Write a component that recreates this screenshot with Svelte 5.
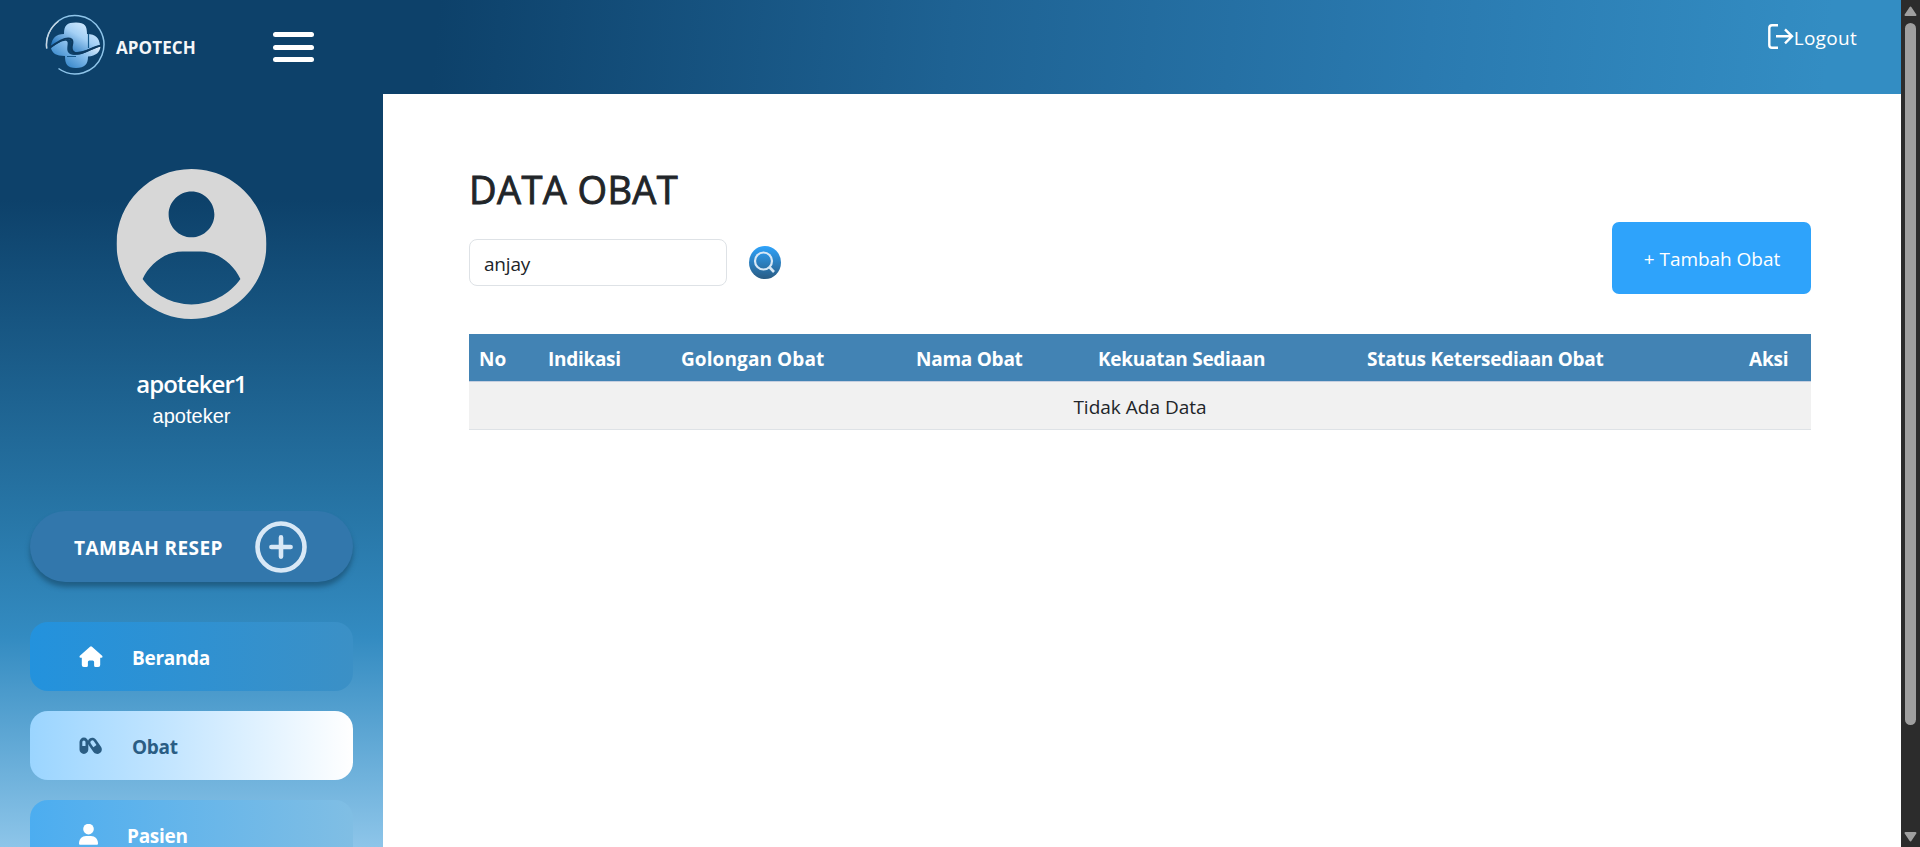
<script>
  const columns = [
    { label: 'No', width: 69, tracking: 0 },
    { label: 'Indikasi', width: 133, tracking: -0.3 },
    { label: 'Golongan Obat', width: 235, tracking: 0.1 },
    { label: 'Nama Obat', width: 182, tracking: -0.25 },
    { label: 'Kekuatan Sediaan', width: 269, tracking: -0.28 },
    { label: 'Status Ketersediaan Obat', width: 382, tracking: -0.27 },
    { label: 'Aksi', width: 72, tracking: -0.2 }
  ];
  let query = $state('anjay');
</script>

<div class="page">
  <div class="app">
    <header>
      <div class="brand">
        <svg class="logo" width="62" height="64" viewBox="0 0 62 64">
          <defs>
            <linearGradient id="cross" x1="0.9" y1="0.1" x2="0.15" y2="0.85">
              <stop offset="0" stop-color="#d9edff" />
              <stop offset="0.45" stop-color="#a4d0f5" />
              <stop offset="1" stop-color="#2375bd" />
            </linearGradient>
            <linearGradient id="lower" x1="1" y1="0.1" x2="0.1" y2="0.8">
              <stop offset="0" stop-color="#f1f8ff" />
              <stop offset="0.5" stop-color="#83bbea" />
              <stop offset="1" stop-color="#2c80c6" />
            </linearGradient>
          </defs>
          <path d="M1.700 34.500A28.700 29.200 0 1 1 13.500 54.500" fill="none" stroke="#8fc5ea" stroke-width="1.500" />
          <path d="M1.700 34.500A28.700 29.200 0 0 1 13.500 7.300" fill="none" stroke="#c9d5df" stroke-width="1.300" />
          <path d="M19 20C19 11 22 8.500 31 8.500S42 12 42 20C51 20 54 24 55 31C46 34 40 37 32 38C23 38 29 29 26 26C22 23 12 28 6 32C7 24 11 20 19 20Z" fill="url(#cross)" />
          <path d="M6 34C14 28 21 25 22.500 28C23.500 32 19 40 29 41C39 41 46 35 55.500 32.500C55 38 51 42 43 42.500C43 50 40 54 31 54S20 50 20 42C11 42 7 39 6 34Z" fill="url(#lower)" />
          <path d="M5 33.500C15 26 23 22.500 26.500 25.500S23 34.500 29 38.500S45 34 56 31.500" fill="none" stroke="#0d3a60" stroke-width="2" />
          <path d="M43.500 20V34M22 42.500H31" fill="none" stroke="#175a8c" stroke-width="1.200" />
        </svg>
        <span class="brand-name">APOTECH</span>
      </div>
      <button class="burger" aria-label="Menu"><i></i><i></i><i></i></button>
      <a class="logout" href="#logout">
        <svg width="27" height="27" viewBox="0 0 27 27" fill="none" stroke="#fff" stroke-width="2.400">
          <path d="M11 2.200H5Q2.300 2.200 2.300 5V22Q2.300 24.800 5 24.800H11" />
          <path d="M9 13.300H25M18 6.300L25 13.300L18 20.300" />
        </svg><span>Logout</span>
      </a>
    </header>

    <div class="body">
      <aside>
        <svg class="avatar" width="150" height="150" viewBox="2 2 20 20">
          <path fill="#d7d7d7" d="M12 2C6.480 2 2 6.480 2 12s4.480 10 10 10 10-4.480 10-10S17.520 2 12 2zm0 3c1.660 0 3.050 1.390 3.050 3.050S13.660 11.100 12 11.100 8.950 9.710 8.950 8.050 10.340 5 12 5zm0 15.060c-2.600 0-4.980-1.270-6.520-3.380C6.400 14.650 8.500 13 10.800 13H13.200c2.300 0 4.400 1.650 5.320 3.680C16.980 18.790 14.600 20.060 12 20.060z" />
        </svg>
        <div class="user">apoteker1</div>
        <div class="role">apoteker</div>

        <button class="recipe">
          <span>TAMBAH RESEP</span>
          <svg width="52" height="52" viewBox="0 0 52 52" fill="none" stroke="#d8e8f6">
            <circle cx="26" cy="26" r="23.500" stroke-width="4.600" />
            <path d="M26 16.400V35.600M16.400 26H35.600" stroke-width="4.600" stroke-linecap="round" />
          </svg>
        </button>

        <nav>
          <a class="item home" href="#beranda">
            <svg width="24" height="24" viewBox="0 0 24 24"><path fill="#fff" d="M11 1.700Q12 .8 13 1.700L23.400 11.100Q24 12.600 22.500 12.800H21.200V20Q21.200 22 19.200 22H16.500Q15.100 22 15.100 20.500V17Q15.100 15.500 13.600 15.500H10.400Q8.900 15.500 8.900 17V20.500Q8.900 22 7.500 22H4.800Q2.800 22 2.800 20V12.800H1.500Q0 12.600.6 11.100Z" /></svg>
            <span>Beranda</span>
          </a>
          <a class="item drug" href="#obat">
            <svg width="24" height="24" viewBox="0 0 24 24">
              <path fill="#2a5d84" fill-rule="evenodd" d="M.5 8A4.400 4.400 0 0 1 9.300 8V15.500A4.400 4.400 0 0 1 .5 15.500ZM3.300 8V12H6.500V8A1.600 1.600 0 0 0 3.300 8Z" />
              <g transform="rotate(-35 16 12)">
                <path fill="#2a5d84" fill-rule="evenodd" d="M11.300 7.500A4.600 4.600 0 0 1 20.500 7.500V16A4.600 4.600 0 0 1 11.300 16ZM14 7.500V12H17.800V7.500A1.900 1.900 0 0 0 14 7.500Z" />
              </g>
            </svg>
            <span>Obat</span>
          </a>
          <a class="item patient" href="#pasien">
            <svg width="19" height="22" viewBox="0 0 19 22"><circle cx="9.500" cy="5.100" r="5.300" fill="#fff" /><path fill="#fff" d="M0 19.700C0 15.200 3 12.100 7 12.100H12C16 12.100 19 15.200 19 19.700Q19 20.800 17.900 20.800H1.100Q0 20.800 0 19.700Z" /></svg>
            <span>Pasien</span>
          </a>
        </nav>
      </aside>

      <main>
        <h1>DATA OBAT</h1>
        <div class="tools">
          <input bind:value={query} aria-label="Cari obat" />
          <button class="search" aria-label="Cari">
            <svg width="32" height="33" viewBox="0 0 32 33">
              <defs><linearGradient id="lens" x2="0" y2="1"><stop stop-color="#2ea3fb" /><stop offset="1" stop-color="#2a5c84" /></linearGradient></defs>
              <ellipse cx="16" cy="16.500" rx="16" ry="16.500" fill="url(#lens)" />
              <g fill="none" stroke="#d8e8f6" stroke-width="2.200"><circle cx="14.500" cy="15" r="8.500" /><path d="M20.300 21L25 26" stroke-width="2.600" /></g>
            </svg>
          </button>
          <button class="add">+ Tambah Obat</button>
        </div>
        <table>
          <colgroup>{#each columns as c}<col style:width="{c.width}px" />{/each}</colgroup>
          <thead><tr>{#each columns as c}<th style:letter-spacing="{c.tracking}px">{c.label}</th>{/each}</tr></thead>
          <tbody><tr><td colspan="7">Tidak Ada Data</td></tr></tbody>
        </table>
      </main>
    </div>
  </div>

  <div class="scrollbar">
    <svg width="13" height="11" viewBox="0 0 13 11"><path d="M6.500 1.500L11.500 9H1.500Z" fill="#9f9f9f" stroke="#9f9f9f" stroke-width="2" stroke-linejoin="round" /></svg>
    <div class="thumb"></div>
    <svg class="down" width="13" height="11" viewBox="0 0 13 11"><path d="M6.500 9.500L11.500 2H1.500Z" fill="#9f9f9f" stroke="#9f9f9f" stroke-width="2" stroke-linejoin="round" /></svg>
  </div>
</div>

<style>
  :global(body) { margin: 0; overflow: hidden; }
  * { box-sizing: border-box; }
  button { font: inherit; border: 0; padding: 0; background: none; color: inherit; }
  a { color: inherit; text-decoration: none; }
  svg { display: block; flex: none; }
  .page { display: flex; width: 1920px; height: 847px; overflow: hidden; background: #fff; font-family: 'Open Sans', 'Noto Sans', sans-serif; font-size: 19px; color: #212529; }
  .app { width: 1901px; display: flex; flex-direction: column; }
  header { height: 94px; flex: none; display: flex; padding-left: 45px; padding-right: 44px; color: #fff; background: linear-gradient(95deg, #0d416a 23%, #1e6293 50%, #2a7ab0 75%, #338dc3 96%); }
  .brand { width: 228px; height: 94px; display: flex; align-items: center; }
  .logo { margin-top: -2px; }
  .brand-name { font: 700 17px/20px 'Open Sans', sans-serif; margin: 2px 0 0 9px; letter-spacing: 0.1px; color: #f4f6f8; }
  .burger { display: flex; flex-direction: column; gap: 7px; width: 41px; margin-top: 32px; height: 30px; }
  .burger i { height: 5px; flex: none; margin-bottom: 0.5px; border-radius: 2.5px; background: #fff; }
  .logout { margin-left: auto; display: flex; height: 27px; margin-top: 23px; line-height: 30px; letter-spacing: 0.3px; }
  .body { display: flex; height: 753px; overflow: hidden; }
  aside { width: 383px; height: 753px; flex: none; overflow: hidden; padding: 75px 30px 0; display: flex; flex-direction: column; color: #fff; background: linear-gradient(180deg, #0d416a 14%, #2877a8 57%, #338bc1 72%, #8dc5e9 100%); }
  .avatar { margin: 0 auto; transform: translateX(-0.5px); }
  .user { font-size: 24px; font-weight: 600; line-height: 30px; letter-spacing: -0.9px; text-align: center; margin-top: 50px; }
  .role { font: 20px/24px 'Liberation Sans', Arial, sans-serif; text-align: center; margin-top: 5px; }
  .recipe { height: 71px; flex: none; margin-top: 83px; border-radius: 36px; background: #3277ac; box-shadow: 0 5px 5px rgba(20, 65, 95, 0.55); font-weight: 700; display: flex; align-items: center; padding-left: 44px; }
  .recipe span { width: 181px; text-align: left; white-space: nowrap; letter-spacing: 0.45px; padding-top: 2px; }
  nav { margin-top: 40px; display: flex; flex-direction: column; gap: 20px; }
  .item { height: 69px; flex: none; border-radius: 18px; display: flex; align-items: center; padding-left: 49px; gap: 29px; font-weight: 700; letter-spacing: -0.3px; }
  .item span { padding-top: 2px; }
  .home { background: linear-gradient(90deg, #2392dd, #3b90c6); }
  .drug { background: linear-gradient(90deg, #9bd5ff, #c5e6ff 45%, #fff); color: #2a5d84; }
  .patient { background: linear-gradient(90deg, #4cadf0, #80bee4); }
  main { flex: 1; padding: 71px 90px 0 86px; }
  h1 { margin: 0; font-size: 38px; line-height: 48px; font-weight: 400; letter-spacing: 0.4px; -webkit-text-stroke: 0.9px #212529; }
  .tools { display: flex; align-items: flex-start; margin-top: 9px; height: 112px; }
  input { width: 258px; height: 47px; margin-top: 17px; padding: 2px 14px 0; border: 1px solid #dee2e6; border-radius: 8px; font: inherit; letter-spacing: -0.2px; color: inherit; outline: none; background: #fff; }
  .search { margin: 24px 0 0 22px; }
  .add { margin-left: auto; width: 199px; height: 72px; padding: 2px 0 0 1px; letter-spacing: -0.05px; border-radius: 7px; background: #2ea3fb; color: #fff; }
  table { width: 1342px; border-collapse: collapse; table-layout: fixed; line-height: 30px; }
  th { height: 47px; padding: 3px 10px 0; text-align: left; font-weight: 700; color: #fff; background: #4283b4; white-space: nowrap; }
  td { height: 48px; padding: 3px 0 0; text-align: center; background: #f1f1f1; border-top: 1px solid #c5cfe0; border-bottom: 1px solid #dee2e6; }
  .scrollbar { width: 19px; background: #2c2c2c; display: flex; flex-direction: column; align-items: center; padding: 6px 0 5px; }
  .thumb { width: 11px; height: 702px; margin-top: 6px; border-radius: 6px; background: #9f9f9f; }
  .down { margin-top: auto; }
</style>
